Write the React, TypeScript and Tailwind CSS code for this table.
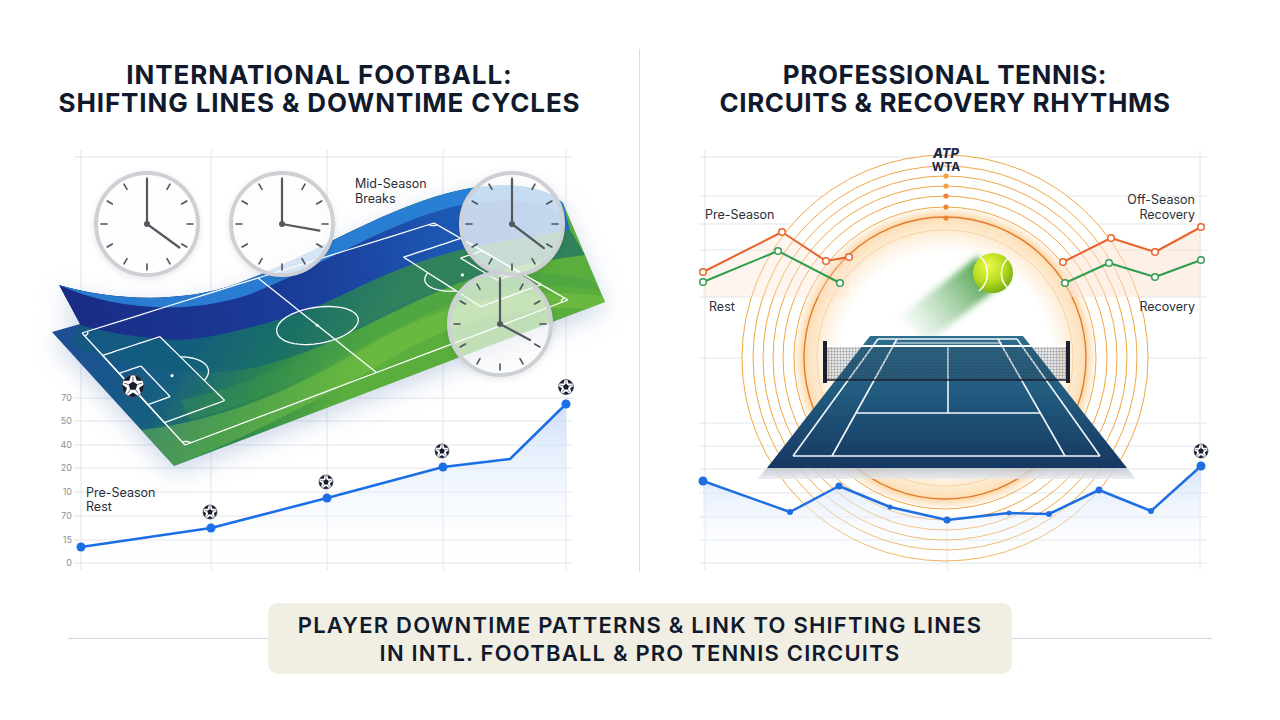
import React from "react";

type Pt = [number, number];

const toPath = (pts: Pt[], close = false) =>
  "M" + pts.map((p) => p[0].toFixed(1) + "," + p[1].toFixed(1)).join(" L") + (close ? " Z" : "");

// ---------- Football pitch mapping ----------
const PA: Pt = [82, 333];
const PB: Pt = [185, 445];
const PD: Pt = [434, 223];
const PC: Pt = [568, 300];
const mp = (u: number, v: number): Pt => {
  const t: Pt = [PA[0] + u * (PD[0] - PA[0]), PA[1] + u * (PD[1] - PA[1])];
  const b: Pt = [PB[0] + u * (PC[0] - PB[0]), PB[1] + u * (PC[1] - PB[1])];
  return [t[0] + v * (b[0] - t[0]), t[1] + v * (b[1] - t[1])];
};
const seg = (u0: number, v0: number, u1: number, v1: number, n = 8) =>
  toPath(Array.from({ length: n + 1 }, (_, i) => mp(u0 + ((u1 - u0) * i) / n, v0 + ((v1 - v0) * i) / n)));
const rectP = (u0: number, v0: number, u1: number, v1: number) =>
  [seg(u0, v0, u1, v0), seg(u1, v0, u1, v1), seg(u1, v1, u0, v1), seg(u0, v1, u0, v0)].join(" ");
const arcP = (uc: number, vc: number, ru: number, rv: number, t0: number, t1: number, n = 48) =>
  toPath(
    Array.from({ length: n + 1 }, (_, i) => {
      const t = ((t0 + ((t1 - t0) * i) / n) * Math.PI) / 180;
      return mp(uc + ru * Math.cos(t), vc + rv * Math.sin(t));
    })
  );

const BASE =
  "M59,285 C110,300 180,304 236,284 C310,258 385,205 465,189 C510,181 545,186 563,203 L605,302 L174,466 L52,332 L80,324 Z";

function Ball({ x, y, r }: { x: number; y: number; r: number }) {
  const id = `bc-${Math.round(x)}-${Math.round(y)}`;
  const ink = "#161c30";
  const pent: Pt[] = Array.from({ length: 5 }, (_, i) => {
    const a = ((-90 + 72 * i) * Math.PI) / 180;
    return [x + Math.cos(a) * r * 0.42, y + Math.sin(a) * r * 0.42];
  });
  const outer = Array.from({ length: 5 }, (_, i) => (-54 + 72 * i) * (Math.PI / 180));
  return (
    <g>
      <clipPath id={id}>
        <circle cx={x} cy={y} r={r} />
      </clipPath>
      <circle cx={x} cy={y} r={r} fill="#fff" />
      <g clipPath={`url(#${id})`}>
        {outer.map((a, i) => {
          const pc: Pt = [x + Math.cos(a) * r * 1.0, y + Math.sin(a) * r * 1.0];
          const pp = Array.from({ length: 5 }, (_, k) => {
            const b = a + Math.PI + ((72 * k) * Math.PI) / 180;
            return [pc[0] + Math.cos(b) * r * 0.42, pc[1] + Math.sin(b) * r * 0.42].join(",");
          }).join(" ");
          return <polygon key={i} points={pp} fill={ink} />;
        })}
        {pent.map(([px, py], i) => {
          const a = ((-90 + 72 * i) * Math.PI) / 180;
          return (
            <line
              key={"l" + i}
              x1={px}
              y1={py}
              x2={x + Math.cos(a) * r * 0.85}
              y2={y + Math.sin(a) * r * 0.85}
              stroke={ink}
              strokeWidth={Math.max(0.5, r * 0.06)}
            />
          );
        })}
      </g>
      <polygon points={pent.map((p) => p.join(",")).join(" ")} fill={ink} />
      <circle cx={x} cy={y} r={r} fill="none" stroke="#3a3f4a" strokeWidth={0.7} />
    </g>
  );
}

function Clock({ cx, cy, a, len = 40, fill = 0.85 }: { cx: number; cy: number; a: number; len?: number; fill?: number }) {
  const rad = (a * Math.PI) / 180;
  return (
    <g>
      <circle cx={cx} cy={cy} r={51} fill="#fff" fillOpacity={fill} stroke="#cdd1d6" strokeWidth={4} filter="url(#clockShadow)" />
      {Array.from({ length: 12 }, (_, i) => {
        const t = (i * 30 * Math.PI) / 180;
        return (
          <line
            key={i}
            x1={cx + Math.sin(t) * 40}
            y1={cy - Math.cos(t) * 40}
            x2={cx + Math.sin(t) * 46}
            y2={cy - Math.cos(t) * 46}
            stroke="#4d525a"
            strokeWidth={1.6}
            strokeLinecap="round"
          />
        );
      })}
      <line x1={cx} y1={cy} x2={cx} y2={cy - 45} stroke="#55595f" strokeWidth={2.2} strokeLinecap="round" />
      <line
        x1={cx}
        y1={cy}
        x2={cx + Math.sin(rad) * len}
        y2={cy - Math.cos(rad) * len}
        stroke="#55595f"
        strokeWidth={2.2}
        strokeLinecap="round"
      />
      <circle cx={cx} cy={cy} r={3} fill="#55595f" />
    </g>
  );
}

function FootballChart() {
  const pts: Pt[] = [
    [81, 547],
    [211, 528],
    [327, 498],
    [443, 467],
    [510, 459],
    [566, 404],
  ];
  const area = `M81,563 L${pts.map((p) => p.join(",")).join(" L")} L566,563 Z`;
  const hl = [398, 421, 445, 468, 492, 516, 540, 563];
  const labels = ["70", "50", "40", "20", "10", "70", "15", "0"];
  const white = "#ffffff";
  return (
    <svg width={639} height={440} viewBox="0 140 639 440" className="block">
      <defs>
        <linearGradient id="pitchBase" gradientUnits="userSpaceOnUse" x1="100" y1="290" x2="330" y2="420">
          <stop offset="0" stopColor="#1b4f94" />
          <stop offset="0.4" stopColor="#175f80" />
          <stop offset="0.7" stopColor="#2a8550" />
          <stop offset="1" stopColor="#5aae3c" />
        </linearGradient>
        <linearGradient id="navyG" gradientUnits="userSpaceOnUse" x1="60" y1="300" x2="570" y2="220">
          <stop offset="0" stopColor="#1a2b84" />
          <stop offset="0.5" stopColor="#1a3f9c" />
          <stop offset="1" stopColor="#1f6ec6" />
        </linearGradient>
        <linearGradient id="areaL" x1="0" y1="0" x2="0" y2="1">
          <stop offset="0" stopColor="#c9dcf9" stopOpacity="0.9" />
          <stop offset="1" stopColor="#ffffff" stopOpacity="0.1" />
        </linearGradient>
        <clipPath id="pitchClip">
          <path d={BASE} />
        </clipPath>
        <filter id="pitchShadow" x="-20%" y="-30%" width="140%" height="160%">
          <feDropShadow dx="0" dy="8" stdDeviation="12" floodColor="#5a7fb5" floodOpacity="0.3" />
        </filter>
        <filter id="clockShadow" x="-20%" y="-20%" width="140%" height="140%">
          <feDropShadow dx="0" dy="2" stdDeviation="3" floodColor="#000" floodOpacity="0.1" />
        </filter>
      </defs>

      {/* grid */}
      <line x1={74} y1={157} x2={573} y2={157} stroke="#e1e4e9" />
      {hl.map((y) => (
        <line key={y} x1={74} y1={y} x2={573} y2={y} stroke="#e1e4e9" />
      ))}
      {[81, 211, 327, 443, 566].map((x) => (
        <line key={x} x1={x} y1={150} x2={x} y2={570} stroke="#e1e4e9" />
      ))}
      {hl.map((y, i) => (
        <text key={"t" + y} x={72} y={y + 3} textAnchor="end" fontSize={9} fill="#8a909a" fontFamily="Inter, sans-serif">
          {labels[i]}
        </text>
      ))}

      {/* area + line */}
      <path d={area} fill="url(#areaL)" />

      {/* pitch */}
      <path d={BASE} fill="url(#pitchBase)" filter="url(#pitchShadow)" />
      <g clipPath="url(#pitchClip)">
        <path
          d="M140,430 C230,420 300,385 370,345 C440,305 510,285 605,296 L605,310 C520,302 450,322 385,362 C310,405 240,440 174,466 Z"
          fill="#7cc545"
          fillOpacity={0.45}
        />
        <path
          d="M180,400 C260,385 330,340 400,305 C460,275 520,265 590,280 L600,290 C530,280 470,292 410,322 C340,358 270,400 190,420 Z"
          fill="#3f9a4a"
          fillOpacity={0.35}
        />
        <path
          d="M80,325 C105,332 140,338 175,340 C200,340 240,332 290,316 C330,305 360,282 420,262 C470,245 520,238 570,230 L585,255 C530,262 480,272 430,295 C370,322 320,352 260,366 C200,380 130,370 70,345 Z"
          fill="#0f5e78"
          fillOpacity={0.55}
        />
        <path
          d="M59,285 C110,300 180,304 236,284 C310,258 385,205 465,189 C510,181 545,186 563,203 L570,230 C520,238 470,245 420,262 C360,282 330,305 290,316 C240,332 200,340 175,340 C140,338 105,332 80,325 Z"
          fill="url(#navyG)"
        />
        <path
          d="M59,285 C110,300 180,304 236,284 C310,258 385,205 465,189 C510,181 545,186 563,203 L566,216 C540,201 505,197 465,204 C390,219 320,268 245,296 C180,316 110,308 59,285 Z"
          fill="#2b84d8"
          fillOpacity={0.9}
        />
      </g>
      {/* markings */}
      <g stroke={white} strokeWidth={1.3} fill="none" strokeLinejoin="round">
        <path d={rectP(0, 0, 1, 1)} />
        <path d={seg(0.5, 0, 0.5, 1)} />
        <path d={arcP(0.5, 0.5, 0.1, 0.15, 0, 360)} />
        <path d={rectP(0, 0.2, 0.16, 0.8)} />
        <path d={rectP(0, 0.36, 0.06, 0.64)} />
        <path d={arcP(0.105, 0.5, 0.09, 0.14, -52, 52)} />
        <path d={rectP(0.84, 0.2, 1, 0.8)} />
        <path d={rectP(0.94, 0.36, 1, 0.64)} />
        <path d={arcP(0.895, 0.5, 0.09, 0.14, 128, 232)} />
        <path d={arcP(0, 0, 0.015, 0.025, 0, 90, 10)} />
        <path d={arcP(0, 1, 0.015, 0.025, -90, 0, 10)} />
        <path d={arcP(1, 0, 0.015, 0.025, 90, 180, 10)} />
        <path d={arcP(1, 1, 0.015, 0.025, 180, 270, 10)} />
      </g>
      {[mp(0.5, 0.5), mp(0.105, 0.5), mp(0.895, 0.5)].map((p, i) => (
        <circle key={i} cx={p[0]} cy={p[1]} r={1.6} fill={white} />
      ))}
      <Ball x={133} y={386} r={11} />

      {/* clocks */}
      <Clock cx={147} cy={224} a={126} len={40} fill={0.92} />
      <Clock cx={282} cy={224} a={100} len={38} fill={0.8} />
      <Clock cx={512} cy={224} a={127} len={40} fill={0.72} />
      <Clock cx={500} cy={324} a={118} len={34} fill={0.62} />

      {/* line */}
      <path d={toPath(pts)} fill="none" stroke="#1a6fe6" strokeWidth={2.5} strokeLinejoin="round" />
      {pts.map((p, i) => (i === 4 ? null : <circle key={i} cx={p[0]} cy={p[1]} r={4.5} fill="#1a6fe6" />))}
      <Ball x={210} y={512} r={7} />
      <Ball x={326} y={482} r={7} />
      <Ball x={442} y={451} r={7} />
      <Ball x={566} y={387} r={7.5} />

      <g fontFamily="Inter, sans-serif" fontSize={12.5} fill="#2a2f38">
        <text x={355} y={187.5}>Mid-Season</text>
        <text x={355} y={202.5}>Breaks</text>
        <text x={86} y={496.5}>Pre-Season</text>
        <text x={86} y={510.5}>Rest</text>
      </g>
    </svg>
  );
}

function TennisChart() {
  const cx = 945;
  const cy = 358;
  const R = 203;
  const upper = [157, 196, 224, 250, 297, 358];
  const lower = [423, 446, 469, 493, 517, 540, 563];
  const blue: Pt[] = [
    [703, 481],
    [790, 512],
    [839, 486],
    [890, 507],
    [947, 520],
    [1009, 513],
    [1049, 514],
    [1099, 490],
    [1151, 511],
    [1201, 466],
  ];
  const blueR = [4.5, 3, 3.5, 2.5, 3.5, 2.5, 3, 3.5, 3, 4.5];
  const orL: Pt[] = [
    [703, 272],
    [782, 232],
    [826, 261],
    [849, 257],
  ];
  const grL: Pt[] = [
    [703, 282],
    [778, 251],
    [840, 283],
  ];
  const orR: Pt[] = [
    [1063, 262],
    [1111, 238],
    [1155, 252],
    [1201, 227],
  ];
  const grR: Pt[] = [
    [1065, 283],
    [1109, 263],
    [1155, 277],
    [1201, 260],
  ];
  const orange = "#e8642c";
  const green = "#2e9e4e";
  const ringR = [151, 162, 172, 182, 192, 203];
  return (
    <svg width={640} height={440} viewBox="640 140 640 440" className="block">
      <defs>
        <radialGradient id="glowT" cx={cx} cy={cy} r={150} gradientUnits="userSpaceOnUse">
          <stop offset="0" stopColor="#ffffff" />
          <stop offset="0.7" stopColor="#ffffff" />
          <stop offset="0.8" stopColor="#fef4e6" />
          <stop offset="0.9" stopColor="#fde4c2" />
          <stop offset="0.95" stopColor="#fcdcb0" />
          <stop offset="1" stopColor="#fdecd6" stopOpacity="0.5" />
        </radialGradient>
        <linearGradient id="courtG" x1="0" y1="0" x2="0" y2="1">
          <stop offset="0" stopColor="#2d6f8f" />
          <stop offset="0.45" stopColor="#215a7e" />
          <stop offset="1" stopColor="#163862" />
        </linearGradient>
        <linearGradient id="shadowG" x1="0" y1="0" x2="0" y2="1">
          <stop offset="0" stopColor="#b9c1cb" />
          <stop offset="1" stopColor="#e7eaee" />
        </linearGradient>
        <linearGradient id="areaR" x1="0" y1="0" x2="0" y2="1">
          <stop offset="0" stopColor="#cfe0f9" stopOpacity="0.85" />
          <stop offset="1" stopColor="#ffffff" stopOpacity="0.1" />
        </linearGradient>
        <radialGradient id="ballG" cx="0.38" cy="0.32" r="0.75">
          <stop offset="0" stopColor="#ecf84a" />
          <stop offset="0.55" stopColor="#b8dc20" />
          <stop offset="1" stopColor="#6ea812" />
        </radialGradient>
        <linearGradient id="trailG" gradientUnits="userSpaceOnUse" x1="985" y1="275" x2="905" y2="335">
          <stop offset="0" stopColor="#3f9a3a" stopOpacity="0.9" />
          <stop offset="1" stopColor="#7fc08a" stopOpacity="0" />
        </linearGradient>
        <filter id="blurT" x="-30%" y="-30%" width="160%" height="160%">
          <feGaussianBlur stdDeviation="3" />
        </filter>
        <pattern id="mesh" width="3" height="3" patternUnits="userSpaceOnUse">
          <path d="M0,0 L3,0 M0,0 L0,3" stroke="#3a3f48" strokeWidth="0.6" strokeOpacity="0.7" fill="none" />
        </pattern>
      </defs>

      {/* grid */}
      {upper.map((y) => {
        const d = Math.abs(y - cy);
        const hc = d < R ? Math.sqrt(R * R - d * d) : 0;
        return (
          <g key={y}>
            <line x1={699} y1={y} x2={cx - hc} y2={y} stroke="#e1e4e9" />
            <line x1={cx + hc} y1={y} x2={1207} y2={y} stroke="#e1e4e9" />
          </g>
        );
      })}
      {lower.map((y) => (
        <line key={y} x1={699} y1={y} x2={1207} y2={y} stroke="#e1e4e9" />
      ))}
      <line x1={705} y1={150} x2={705} y2={570} stroke="#e1e4e9" />
      <line x1={1200} y1={150} x2={1200} y2={570} stroke="#e1e4e9" />
      <line x1={947} y1={520} x2={947} y2={570} stroke="#e1e4e9" />

      {/* rings */}
      <circle cx={cx} cy={cy} r={150} fill="url(#glowT)" />
      <circle cx={cx} cy={cy} r={128} fill="none" stroke="#f6b35e" strokeWidth={1} strokeOpacity={0.45} />
      <circle cx={cx} cy={cy} r={141} fill="none" stroke="#e47a2c" strokeWidth={1.4} />
      {ringR.map((r) => (
        <circle key={r} cx={cx} cy={cy} r={r} fill="none" stroke="#f0a845" strokeWidth={1} />
      ))}
      {[176, 186, 196, 207, 218].map((y, i) => (
        <circle key={y} cx={946} cy={y} r={2.6} fill={i < 2 ? "#f3a143" : "#ec8436"} />
      ))}
      <text x={946} y={158} textAnchor="middle" fontFamily="Inter, sans-serif" fontSize={13} fontWeight={800} fontStyle="italic" fill="#1b2a4a">
        ATP
      </text>
      <text x={946} y={171} textAnchor="middle" fontFamily="Inter, sans-serif" fontSize={12} fontWeight={700} fill="#1b2a4a">
        WTA
      </text>

      {/* orange / green lines */}
      <path d={`${toPath(orR)} L1201,297 L1063,297 Z`} fill="#fbe2d0" fillOpacity={0.5} />
      <path d={`${toPath(orL)} L849,297 L703,297 Z`} fill="#fbe2d0" fillOpacity={0.35} />
      {[
        [orL, orange],
        [grL, green],
        [orR, orange],
        [grR, green],
      ].map(([p, c], i) => (
        <g key={i}>
          <path d={toPath(p as Pt[])} fill="none" stroke={c as string} strokeWidth={2} strokeLinejoin="round" />
          {(p as Pt[]).map((q, j) => (
            <circle key={j} cx={q[0]} cy={q[1]} r={3.3} fill="#fff" stroke={c as string} strokeWidth={1.5} />
          ))}
        </g>
      ))}

      <g fontFamily="Inter, sans-serif" fontSize={12.5} fill="#2a2f38">
        <text x={705} y={218.5}>Pre-Season</text>
        <text x={709} y={311}>Rest</text>
        <text x={1195} y={204} textAnchor="end">Off-Season</text>
        <text x={1195} y={219} textAnchor="end">Recovery</text>
        <text x={1195} y={311} textAnchor="end">Recovery</text>
      </g>

      {/* ball */}
      <polygon points="978,256 1000,286 928,342 898,318" fill="url(#trailG)" filter="url(#blurT)" />
      <circle cx={993} cy={273} r={20} fill="url(#ballG)" />
      <path d="M980,256 C990,266 990,282 979,291" fill="none" stroke="#fff" strokeWidth={1.6} strokeOpacity={0.9} />
      <path d="M1008,258 C999,267 999,281 1009,289" fill="none" stroke="#fff" strokeWidth={1.6} strokeOpacity={0.9} />

      {/* court */}
      <polygon points="767,468 1127,468 1136,479 757,479" fill="url(#shadowG)" opacity={0.8} />
      <polygon points="870,336 1023,336 1127,468 767,468" fill="url(#courtG)" />
      <g stroke="#f4f7fa" strokeWidth={1.6} fill="none">
        <line x1={793} y1={456} x2={1100} y2={456} />
        <line x1={878} y1={339} x2={793} y2={456} />
        <line x1={1017} y1={339} x2={1100} y2={456} />
        <line x1={897} y1={339} x2={832} y2={456} />
        <line x1={998} y1={339} x2={1065} y2={456} />
        <line x1={878} y1={339} x2={1017} y2={339} />
        <line x1={893} y1={343} x2={1002} y2={343} strokeWidth={1} />
        <line x1={856} y1={413} x2={1040} y2={413} />
        <line x1={948} y1={347} x2={948} y2={413} />
      </g>
      {/* net */}
      <rect x={827} y={346} width={239} height={34} fill="url(#mesh)" />
      <rect x={827} y={346} width={239} height={34} fill="#1d2e45" fillOpacity={0.12} />
      <line x1={827} y1={346} x2={1066} y2={346} stroke="#ffffff" strokeWidth={2.2} />
      <line x1={827} y1={380} x2={1066} y2={380} stroke="#1a2030" strokeWidth={1.6} />
      <rect x={823} y={341} width={4} height={42} fill="#1a2030" />
      <rect x={1066} y={341} width={4} height={42} fill="#1a2030" />

      {/* blue line */}
      <path d={`M703,563 L${blue.map((p) => p.join(",")).join(" L")} L1201,563 Z`} fill="url(#areaR)" />
      <path d={toPath(blue)} fill="none" stroke="#1f6fe0" strokeWidth={2.5} strokeLinejoin="round" />
      {blue.map((p, i) => (
        <circle key={i} cx={p[0]} cy={p[1]} r={blueR[i]} fill="#1f6fe0" />
      ))}
      <Ball x={1201} y={451} r={7} />
    </svg>
  );
}

export default function App() {
  return (
    <div className="w-[1280px] h-[720px] bg-white overflow-hidden font-['Inter',sans-serif] text-[#101a2c]">
      <div className="flex h-[580px]">
        <section className="w-[639px] flex flex-col">
          <h1 className="h-[140px] pt-[61px] text-center text-[26px] leading-[28px] font-bold tracking-[0.9px]">
            INTERNATIONAL FOOTBALL:
            <br />
            SHIFTING LINES &amp; DOWNTIME CYCLES
          </h1>
          <FootballChart />
        </section>
        <div className="w-px bg-[#d8dce2] mt-[49px] h-[523px]" />
        <section className="w-[640px] flex flex-col">
          <h1 className="h-[140px] pt-[61px] pr-[30px] text-center text-[26px] leading-[28px] font-bold tracking-[0.6px]">
            PROFESSIONAL TENNIS:
            <br />
            CIRCUITS &amp; RECOVERY RHYTHMS
          </h1>
          <TennisChart />
        </section>
      </div>
      <div className="flex items-center px-[68px] mt-[23px] h-[71px]">
        <div className="flex-1 h-px bg-[#d4d8de]" />
        <div className="w-[744px] h-[71px] rounded-[10px] bg-[#f1efe3] flex flex-col items-center justify-center text-[22px] leading-[28px] font-semibold tracking-[1.2px]">
          <span>PLAYER DOWNTIME PATTERNS &amp; LINK TO SHIFTING LINES</span>
          <span>IN INTL. FOOTBALL &amp; PRO TENNIS CIRCUITS</span>
        </div>
        <div className="flex-1 h-px bg-[#d4d8de]" />
      </div>
    </div>
  );
}
